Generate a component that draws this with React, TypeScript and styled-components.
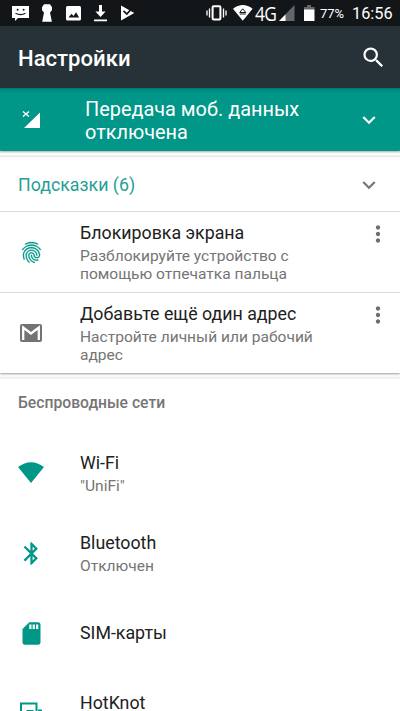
import React from "react";
import styled, { createGlobalStyle } from "styled-components";
import { MdFingerprint, MdBluetooth, MdSearch, MdMoreVert, MdExpandMore, MdSdStorage } from "react-icons/md";

const TEAL = "#009688";
const GREY = "#757575";

const GlobalStyle = createGlobalStyle`
  * { box-sizing: border-box; }
  body { margin: 0; background: #fff; font-family: Roboto, "Noto Sans", sans-serif; }
  svg { display: block; flex: none; }
`;

const Screen = styled.div`
  width: 400px;
  height: 711px;
  overflow: hidden;
  display: flex;
  flex-direction: column;
  background: #fff;
`;

const StatusBar = styled.div`
  height: 26px;
  flex: none;
  display: flex;
  justify-content: space-between;
  background: #131619;
  color: #fff;
`;

const StatusText = styled.span<{ $size: number; $width: number }>`
  width: ${(p) => p.$width}px;
  font-size: ${(p) => p.$size}px;
  line-height: 27px;
  white-space: nowrap;
`;

const StatusRight = styled.div`
  display: flex;
  align-items: flex-start;
`;

const Network = styled(StatusText)`
  font-family: "Open Sans", sans-serif;
  letter-spacing: -0.8px;
  line-height: 28px;
  transform: scaleX(0.87);
  transform-origin: left;
`;

const Toolbar = styled.header`
  height: 62px;
  flex: none;
  display: flex;
  align-items: center;
  justify-content: space-between;
  padding: 1px 13px 0 18px;
  background: #263238;
  color: #fff;
`;

const Title = styled.h1`
  margin: 0;
  padding-top: 1px;
  font-size: 22.1px;
  font-weight: 500;
  line-height: 28px;
`;

const Banner = styled.div`
  height: 63px;
  flex: none;
  display: grid;
  grid-template-columns: 85px 1fr 44px;
  align-items: center;
  background: linear-gradient(#00786d, #008b7e 2px, ${TEAL} 5px);
  color: #fff;
  box-shadow: 0 1px 2px rgba(0, 0, 0, 0.35);
`;

const BannerText = styled.div`
  font-size: 19.9px;
  line-height: 23px;
  padding-top: 3px;
  white-space: nowrap;
`;

const IconSlot = styled.div`
  display: flex;
  justify-content: center;
  width: 62px;
  color: ${TEAL};
`;

/* Thickens the ridges without outlining the icon's empty bounding path. */
const FingerprintIcon = styled(MdFingerprint)`
  path:not([fill="none"]) {
    stroke: ${TEAL};
    stroke-width: 0.3px;
  }
  path[fill="none"] {
    stroke: none;
  }
`;

const ChevronSlot = styled.div`
  color: inherit;
`;

const Gap = styled.div`
  height: 6px;
  flex: none;
  background: linear-gradient(rgba(250, 250, 250, 0) 4px, #e7e7e7 5px);
`;

const Tips = styled.section`
  flex: none;
  background: #fff;
  box-shadow: 0 1px 2px rgba(0, 0, 0, 0.4);
  clip-path: inset(0 0 -6px 0);
`;

const TipsHeader = styled.div`
  height: 54px;
  display: grid;
  grid-template-columns: 1fr 44px;
  align-items: center;
  padding: 2px 0 0 18px;
  color: ${GREY};
`;

const TipsTitle = styled.div`
  color: #26a095;
  font-size: 17.8px;
  line-height: 22px;
`;

const TipRow = styled.article`
  height: 81px;
  border-top: 1px solid #dcdcdc;
  display: grid;
  grid-template-columns: 80px 1fr 35px;
  align-items: center;
`;

const TextBlock = styled.div`
  display: flex;
  flex-direction: column;
  gap: 2px;
`;

const ItemTitle = styled.div`
  font-size: 17.8px;
  line-height: 22px;
  color: #212121;
  white-space: nowrap;
`;

const ItemSub = styled.div`
  font-size: 15.55px;
  line-height: 18px;
  padding-top: 1px;
  margin-bottom: -1px;
  color: ${GREY};
  white-space: nowrap;
`;

const MenuButton = styled.div`
  align-self: start;
  padding-top: 9px;
  color: #6e6e6e;
`;

const CardGap = styled.div`
  height: 6px;
  flex: none;
  background: linear-gradient(rgba(250, 250, 250, 0) 3px, #f1f1f1 4px);
`;

const SectionHeader = styled.h2`
  margin: 0;
  height: 54px;
  flex: none;
  padding: 13px 0 0 18px;
  font-size: 15.7px;
  font-weight: 500;
  line-height: 22px;
  color: ${GREY};
`;

const SettingRow = styled.div`
  height: 80px;
  flex: none;
  display: grid;
  grid-template-columns: 80px 1fr;
  align-items: center;
`;

/* Last visible row: only its upper part fits on the screen. */
const PartialRow = styled(SettingRow)`
  height: 38px;
  align-items: start;
  padding-top: 19px;
`;

const PartialIcon = styled(IconSlot)`
  padding-top: 10px;
`;

const Setting = ({ icon, title, sub }: { icon: React.ReactNode; title: string; sub?: string }) => (
  <SettingRow>
    <IconSlot>{icon}</IconSlot>
    <TextBlock>
      <ItemTitle>{title}</ItemTitle>
      {sub && <ItemSub>{sub}</ItemSub>}
    </TextBlock>
  </SettingRow>
);

const Tip = ({ icon, title, lines }: { icon: React.ReactNode; title: string; lines: string[] }) => (
  <TipRow>
    <IconSlot>{icon}</IconSlot>
    <TextBlock>
      <ItemTitle>{title}</ItemTitle>
      <ItemSub>
        {lines.map((l) => (
          <div key={l}>{l}</div>
        ))}
      </ItemSub>
    </TextBlock>
    <MenuButton>
      <MdMoreVert size={26} />
    </MenuButton>
  </TipRow>
);

const NotificationIcons = () => (
  <svg width="140" height="26" fill="#fff">
    <path d="M12 6h17v12H18l-3 3v-3h-3z" />
    <path d="M15.500 13.200q5 2.800 10 0" fill="none" stroke="#131619" strokeWidth="1.100" />
    <circle cx="17.600" cy="9.800" r="1" fill="#131619" />
    <circle cx="23.600" cy="9.800" r="1" fill="#131619" />
    <path d="M44 4.300h6l2 3v3l-2 2.200 1.900 9.200h-9.700L44 12.500l-2-2.200v-3z" />
    <rect x="66" y="6" width="15" height="14.500" rx="1.500" />
    <path d="M68.500 17.500l3-3.800 2 2.200 2.600-3.700 3 5.300z" fill="#131619" />
    <path d="M99 5h3v6.500h3.600l-5.100 5.500-5.100-5.500H99zM94 19.500h13v1.700H94z" />
    <path d="M121 5.500l13.300 7.600L121 20.500z" />
    <path d="M123.500 10.800l3.300 3.200 5.700-6.300" fill="none" stroke="#131619" strokeWidth="1.700" />
  </svg>
);

const WifiStatusIcon = () => (
  <svg width="22" height="26" fill="#fff">
    <path d="M0 8.800q9.800-7.500 19.600 0l-9.800 12z" />
    <path d="M6.700 12.500l3-3.700 3.100 3.700zM6.700 14h6.100" fill="none" stroke="#131619" strokeWidth="1" />
  </svg>
);

const VibrateIcon = () => (
  <svg width="22" height="26" fill="none" stroke="#fff">
    <rect x="6.600" y="6.300" width="7.800" height="13.200" rx="1" strokeWidth="2" />
    <path d="M1 10.500v5M3.500 8.500v9M17.500 8.500v9M20 10.500v5" strokeWidth="1.300" />
  </svg>
);

export default function App() {
  return (
    <>
      <GlobalStyle />
      <Screen>
        <StatusBar>
          <NotificationIcons />
          <StatusRight>
            <VibrateIcon />
            <svg width="5" height="26" />
            <WifiStatusIcon />
            <Network $size={20} $width={24}>4G</Network>
            <svg width="25" height="26">
              <path d="M15.500 5v16H0z" fill="#63676a" />
              <path d="M6.500 14.500v6.500H0z" fill="#fff" />
            </svg>
            <svg width="16" height="26">
              <path d="M3 5h4v2H3zM0 7h10.500v3H0z" fill="#63676a" />
              <path d="M0 9.500h10.500V21H0z" fill="#fff" />
            </svg>
            <StatusText $size={13} $width={32}>77%</StatusText>
            <StatusText $size={16.300} $width={48}>16:56</StatusText>
          </StatusRight>
        </StatusBar>

        <Toolbar>
          <Title>Настройки</Title>
          <MdSearch size={27} />
        </Toolbar>

        <Banner>
          <svg width="62" height="30" fill="#fff">
            <path d="M40 7.500V23H24z" />
            <path d="M23 6.500l6 5M29 6.500l-6 5" stroke="#fff" strokeWidth="1.400" />
          </svg>
          <BannerText>
            Передача моб. данных
            <br />
            отключена
          </BannerText>
          <ChevronSlot>
            <MdExpandMore size={26} />
          </ChevronSlot>
        </Banner>
        <Gap />

        <Tips>
          <TipsHeader>
            <TipsTitle>Подсказки (6)</TipsTitle>
            <ChevronSlot>
              <MdExpandMore size={26} />
            </ChevronSlot>
          </TipsHeader>
          <Tip
            icon={<FingerprintIcon size={25} />}
            title="Блокировка экрана"
            lines={["Разблокируйте устройство с", "помощью отпечатка пальца"]}
          />
          <Tip
            icon={
              <svg width="22" height="18">
                <rect width="22" height="18" rx="2" fill="#737373" />
                <path d="M3.200 16V3.500L11 9.500l7.800-6V16" fill="none" stroke="#fff" strokeWidth="2.300" />
              </svg>
            }
            title="Добавьте ещё один адрес"
            lines={["Настройте личный или рабочий", "адрес"]}
          />
        </Tips>
        <CardGap />

        <SectionHeader>Беспроводные сети</SectionHeader>
        <Setting
          icon={
            <svg width="26" height="22" fill={TEAL}>
              <path d="M0 5Q13-4.500 26 5L13 21z" />
            </svg>
          }
          title="Wi-Fi"
          sub={'"UniFi"'}
        />
        <Setting icon={<MdBluetooth size={27} />} title="Bluetooth" sub="Отключен" />
        <Setting icon={<MdSdStorage size={27} />} title="SIM-карты" />
        <PartialRow>
          <PartialIcon>
            <svg width="22" height="9" fill="none" stroke={TEAL} strokeWidth="2">
              <path d="M1 9V1.500h15.500V9M6.500 9h7M18 8.500h4" />
            </svg>
          </PartialIcon>
          <ItemTitle>HotKnot</ItemTitle>
        </PartialRow>
      </Screen>
    </>
  );
}
